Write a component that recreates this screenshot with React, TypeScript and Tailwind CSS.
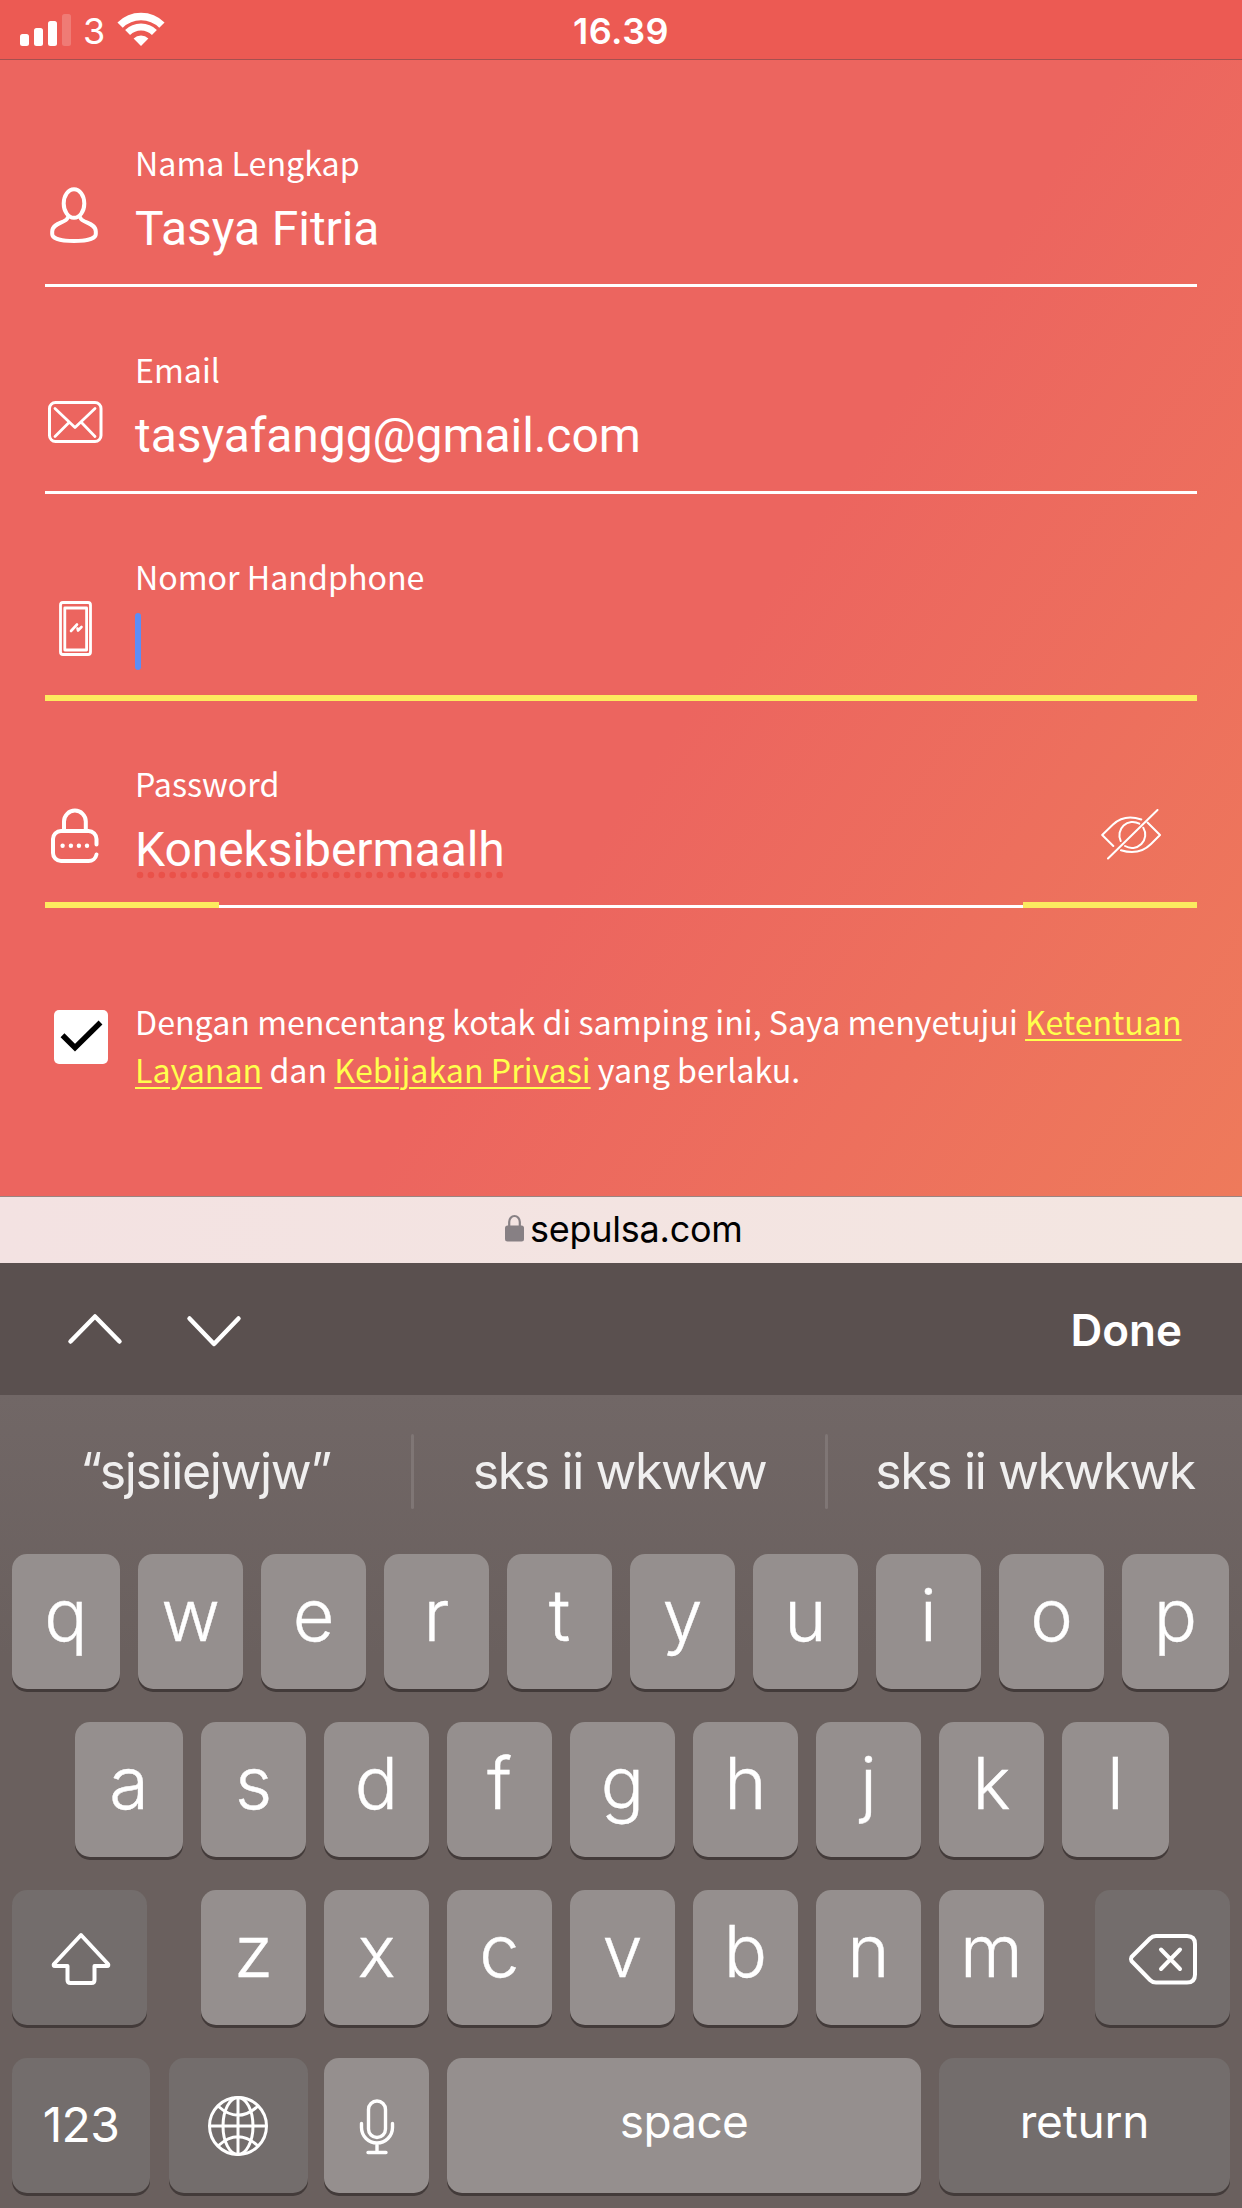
import type { ReactNode } from "react";

const INTER = "font-['Inter','Liberation_Sans',sans-serif]";
const ROBOTO = "font-['Roboto','Liberation_Sans',sans-serif]";
const SOURCE = "font-['Noto_Sans_CJK_SC','Noto_Sans',sans-serif]";

function StatusBar() {
  return (
    <header className={`grid h-[60px] grid-cols-3 border-b border-[#a5504f] bg-[#ec5a53] text-white ${INTER}`}>
      <div className="flex items-start pl-5">
        <svg width="51" height="46" className="shrink-0" fill="white">
          <rect x="0" y="34" width="9" height="12" rx="2.5" />
          <rect x="14" y="28" width="9" height="18" rx="2.5" />
          <rect x="28" y="21" width="9" height="25" rx="2.5" />
          <rect x="42" y="14" width="9" height="32" rx="2.5" opacity="0.2" />
        </svg>
        <span className="ml-[12px] w-[34px] text-[36px] leading-[62px]">3</span>
        <svg width="48" height="48" viewBox="0 0 48 48" fill="none" stroke="white">
          <path d="M3.1 25.1A29.5 29.5 0 0 1 44.9 25.1" strokeWidth="7.5" />
          <path d="M10.6 32.6A19 19 0 0 1 37.4 32.6" strokeWidth="7" />
          <path d="M24 46L16.6 38.6A10.5 10.5 0 0 1 31.4 38.6Z" fill="white" stroke="none" />
        </svg>
      </div>
      <div className="text-center text-[36px] leading-[62px] font-semibold tracking-[0.5px]">16.39</div>
      <div />
    </header>
  );
}

function UserIcon() {
  return (
    <svg width="60" height="60" fill="none" stroke="white" strokeWidth="4" strokeLinecap="round">
      <ellipse cx="29" cy="18.5" rx="10.3" ry="14.3" />
      <path d="M22.5 33C21 38 7.5 37.500 7.200 46.500V49C7.200 54 18 56 29 56S50.800 54 50.800 49V46.500C50.500 37.500 37 38 35.500 33" />
    </svg>
  );
}

function MailIcon() {
  return (
    <svg width="60" height="60" fill="none" stroke="white" strokeWidth="3" strokeLinecap="round" strokeLinejoin="round">
      <rect x="4.500" y="10.500" width="51.500" height="39" rx="6" />
      <path d="M10 16.500L30 35.500L50 16.500M24 30.500L10 44.500M36.500 30.500L50 44.500" strokeWidth="2.800" />
    </svg>
  );
}

function PhoneIcon() {
  return (
    <svg width="60" height="60" fill="none" stroke="white" strokeWidth="2.8" strokeLinecap="round" strokeLinejoin="round">
      <rect x="15.500" y="3.500" width="30" height="52" rx="2.500" />
      <rect x="19.800" y="9" width="21.800" height="42" strokeWidth="2.800" />
      <path d="M26 32L32 25.500M33 31.500L36.500 28M32.500 29.500L33 31.500" strokeWidth="2.600" />
    </svg>
  );
}

function PasswordIcon() {
  return (
    <svg width="60" height="60" fill="none" stroke="white" strokeWidth="4" strokeLinecap="round">
      <path d="M19 24V15.500A10.900 10.900 0 0 1 40.800 15.500V24" />
      <path d="M51.500 38.500V33A8 8 0 0 0 43.500 25H16A8 8 0 0 0 8 33V47A8 8 0 0 0 16 55H43.500A8 8 0 0 0 51.500 48.500" />
      <g fill="white" stroke="none">
        <circle cx="17.600" cy="39.700" r="2.200" />
        <circle cx="25.900" cy="39.700" r="2.200" />
        <circle cx="33.900" cy="39.700" r="2.200" />
        <circle cx="42" cy="39.700" r="2.200" />
      </g>
    </svg>
  );
}

function EyeOffIcon() {
  return (
    <svg width="60" height="52" fill="none" stroke="white" strokeWidth="2" strokeLinecap="round" strokeLinejoin="round">
      <path d="M12.300 37L1.200 26L12 15.500C20 8 30 7 40.300 10.500" />
      <path d="M46.500 13.500L59 26L50 35C42 43 32 45 20 41.300" />
      <path d="M19.700 32A13.300 13.300 0 0 1 38.300 14.700M42.300 18.700A13.300 13.300 0 0 1 24 37" />
      <path d="M7 49.500L56.500 1" />
    </svg>
  );
}

type FieldProps = {
  label: string;
  icon: ReactNode;
  children?: ReactNode;
  line: ReactNode;
  action?: ReactNode;
};

function Field({ label, icon, children, line, action }: FieldProps) {
  return (
    <div className="flex h-[207px] flex-col justify-between">
      <div className="flex">
        <div className="w-[90px] shrink-0 pt-[105px]">{icon}</div>
        <div className="grow pt-[62px]">
          <div className={`text-[32.2px] leading-[40px] ${SOURCE}`}>{label}</div>
          <div className={`mt-[17px] h-[60px] text-[48px] leading-[60px] tracking-[-0.07px] ${ROBOTO}`}>{children}</div>
        </div>
        {action}
      </div>
      {line}
    </div>
  );
}

function SignupForm() {
  const plain = <div className="h-[3px] bg-white" />;
  return (
    <main className="h-[1136px] bg-[linear-gradient(124deg,#ec655f_0%,#ec655f_56%,#ee7a5b_100%)] px-[45px] pt-5 text-white">
      <Field label="Nama Lengkap" icon={<UserIcon />} line={plain}>
        Tasya Fitria
      </Field>
      <Field label="Email" icon={<MailIcon />} line={plain}>
        tasyafangg@gmail.com
      </Field>
      <Field label="Nomor Handphone" icon={<PhoneIcon />} line={<div className="h-[6px] bg-[#fdeb5f]" />}>
        <div className="mt-[1px] h-[57px] w-[6px] rounded-full bg-[#5b8df6]" />
      </Field>
      <Field
        label="Password"
        icon={<PasswordIcon />}
        action={
          <div className="mr-9 pt-[108px]">
            <EyeOffIcon />
          </div>
        }
        line={
          <div className="flex h-[6px] items-end">
            <div className="h-[6px] w-[174px] bg-[#fdeb5f]" />
            <div className="h-[3px] grow bg-white" />
            <div className="h-[6px] w-[174px] bg-[#fbea60]" />
          </div>
        }
      >
        <div className="relative w-max">
          Koneksibermaalh
          <svg className="absolute top-[51px] left-[1px]" width="370" height="8">
            <line x1="4" y1="4" x2="366" y2="4" stroke="#e9463d" strokeOpacity="0.65" strokeWidth="6.6" strokeLinecap="round" strokeDasharray="0 10.9" />
          </svg>
        </div>
      </Field>
      <div className="flex pt-[89px]">
        <div className="mt-[13px] mr-[27px] ml-[9px] size-[54px] shrink-0 rounded-[5px] bg-white">
          <svg width="54" height="54" fill="none" stroke="black" strokeWidth="5.500">
            <path d="M8.500 25.300L21 37.700L46.500 12.500" />
          </svg>
        </div>
        <p className={`text-[32.2px] leading-[48px] whitespace-nowrap ${SOURCE}`}>
          Dengan mencentang kotak di samping ini, Saya menyetujui{" "}
          <a className="text-[#ffff4d] underline decoration-[2px] underline-offset-[4px]">Ketentuan</a>
          <br />
          <a className="text-[#ffff4d] underline decoration-[2px] underline-offset-[4px]">Layanan</a> dan{" "}
          <a className="text-[#ffff4d] underline decoration-[2px] underline-offset-[4px]">Kebijakan Privasi</a> yang berlaku.
        </p>
      </div>
    </main>
  );
}

function AddressBar() {
  return (
    <div className={`flex h-[67px] items-start border-t border-[#9b8380] bg-[linear-gradient(90deg,#f3e2e2,#f3e6e1)] pl-[505px] ${INTER}`}>
      <svg width="19" height="28" className="mt-[17px] mr-[6px]">
        <path d="M4.200 12V8A5.300 6 0 0 1 14.800 8V12" fill="none" stroke="#878084" strokeWidth="2.200" />
        <rect x="0" y="11.500" width="19" height="16" rx="2.500" fill="#878084" />
      </svg>
      <span className="text-[36px] leading-[64px] tracking-[-0.25px] text-black">sepulsa.com</span>
    </div>
  );
}

function Toolbar() {
  return (
    <div className="flex h-[132px] items-center bg-[#5a504f] pr-[60px] pl-[66px] text-white">
      <svg width="180" height="40" fill="none" stroke="white" strokeWidth="4.500" strokeLinecap="round" strokeLinejoin="round">
        <path d="M4.500 32.500L29 7.500L53.500 32.500M123.500 9.500L148 35L172.500 9.500" />
      </svg>
      <span className={`mt-[2px] ml-auto text-[44px] leading-[50px] font-semibold ${INTER}`}>Done</span>
    </div>
  );
}

function Suggestions() {
  return (
    <div className={`flex h-[159px] items-start pt-[39px] text-[50px] leading-[75px] tracking-[-1.4px] text-[#f0efef] ${INTER}`}>
      <span className="w-[411px] text-center">“sjsiiejwjw”</span>
      <span className="h-[75px] w-[3px] rounded-full bg-[#7f7675]" />
      <span className="w-[411px] text-center">sks ii wkwkw</span>
      <span className="h-[75px] w-[3px] rounded-full bg-[#7f7675]" />
      <span className="w-[414px] text-center">sks ii wkwkwk</span>
    </div>
  );
}

function Key({ width, dark, children }: { width: string; dark?: boolean; children: ReactNode }) {
  return (
    <div
      className={`flex h-[135px] shrink-0 justify-center rounded-[15px] text-white shadow-[0_3px_0_#433b3a] ${
        dark ? "bg-[#736d6c]" : "bg-[#958f8e]"
      } ${width}`}
    >
      {children}
    </div>
  );
}

function Letter({ char, width = "w-[105px]" }: { char: string; width?: string }) {
  return (
    <Key width={width}>
      <span className="text-[72px] leading-[122px] font-light [-webkit-text-stroke:0.4px_white]">{char}</span>
    </Key>
  );
}

function Keyboard() {
  return (
    <div className={`flex flex-col gap-[33px] px-3 ${INTER}`}>
      <div className="flex gap-[18px]">
        <Letter char="q" width="w-[108px]" />
        {"wertyuio".split("").map((c) => (
          <Letter key={c} char={c} />
        ))}
        <Letter char="p" width="w-[107px]" />
      </div>
      <div className="flex gap-[18px] pl-[63px]">
        <Letter char="a" width="w-[108px]" />
        {"sdfghjk".split("").map((c) => (
          <Letter key={c} char={c} />
        ))}
        <Letter char="l" width="w-[107px]" />
      </div>
      <div className="flex justify-between">
        <Key width="w-[135px]" dark>
          <svg width="64" height="60" className="mt-[40px] ml-[3px]" fill="none" stroke="white" strokeWidth="4" strokeLinejoin="round">
            <path d="M32 5L59 34Q60 36 58 36H45.500V50Q45.500 53 42.500 53H21.500Q18.500 53 18.500 50V36H6Q4 36 5 34Z" />
          </svg>
        </Key>
        <div className="flex gap-[18px] pl-[3px]">
          {"zxcvbnm".split("").map((c) => (
            <Letter key={c} char={c} />
          ))}
        </div>
        <Key width="w-[135px]" dark>
          <svg width="70" height="54" className="mt-[42px]" fill="none" stroke="white" strokeWidth="4" strokeLinecap="round" strokeLinejoin="round">
            <path d="M3.500 25Q2.500 27 3.500 29L22 48Q24.500 50.500 28 50.500H59Q67 50.500 67 42.500V12Q67 4 59 4H28Q24.500 4 22 6.500Z" />
            <path d="M33 17.500L52 37M52 17.500L33 37" />
          </svg>
        </Key>
      </div>
      <div className="flex">
        <Key width="w-[138px]" dark>
          <span className="text-[48px] leading-[133px] tracking-[-0.6px]">123</span>
        </Key>
        <div className="ml-[19px]">
          <Key width="w-[139px]" dark>
            <svg width="62" height="62" className="mt-[37px] mr-[2px]" fill="none" stroke="white" strokeWidth="3">
              <circle cx="31" cy="31" r="28.500" />
              <ellipse cx="31" cy="31" rx="15" ry="28.500" />
              <path d="M31 2.500V59.500M2.500 31H59.500M11.500 11.500Q31 29 50.500 11.500M11.500 50.500Q31 33 50.500 50.500" />
            </svg>
          </Key>
        </div>
        <div className="ml-4 flex gap-[18px]">
          <Key width="w-[105px]">
            <svg width="36" height="58" className="mt-[40px] ml-[1px]" fill="none" stroke="white" strokeWidth="3.400" strokeLinecap="round">
              <rect x="9.500" y="3" width="17" height="36.500" rx="8.500" />
              <path d="M2.500 25.500V29.500A15.500 15.500 0 0 0 33.500 29.500V25.500M18 45V54.500M9 54.500H27" />
            </svg>
          </Key>
          <Key width="w-[474px]">
            <span className="text-[46px] leading-[127px] tracking-[-0.7px]">space</span>
          </Key>
          <Key width="w-[291px]" dark>
            <span className="text-[46px] leading-[127px] tracking-[-0.2px]">return</span>
          </Key>
        </div>
      </div>
    </div>
  );
}

export default function App() {
  return (
    <div className="h-[2208px] w-[1242px] overflow-hidden bg-[#6a605e]">
      <StatusBar />
      <SignupForm />
      <AddressBar />
      <Toolbar />
      <div className="h-[813px] bg-[linear-gradient(180deg,#716766_0px,#6a605e_260px)]">
        <Suggestions />
        <Keyboard />
      </div>
    </div>
  );
}
